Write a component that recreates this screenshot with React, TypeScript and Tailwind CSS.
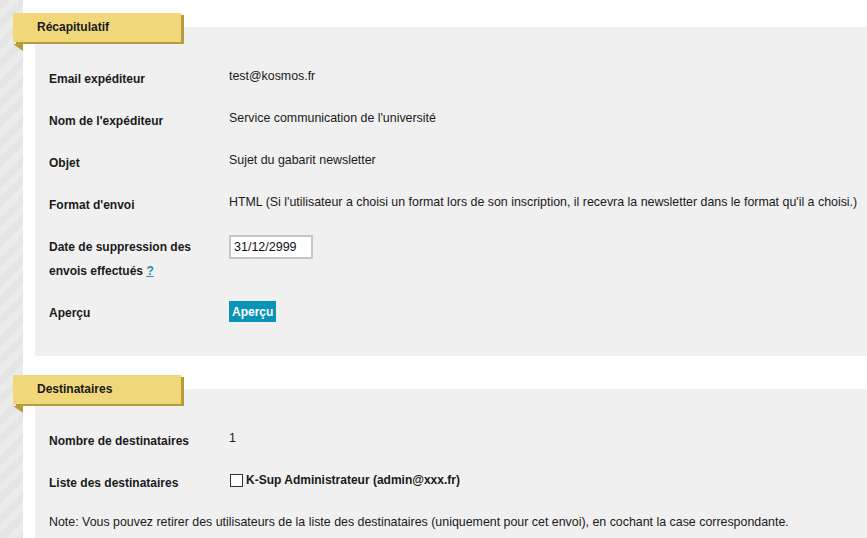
import React from "react";

function Tab({ title }: { title: string }) {
  return (
    <div className="absolute left-[-22px] top-[-14px] h-[29px] w-[168px] bg-[#efd77a] shadow-[3px_2px_0_#b59c3c] pl-[24px] font-bold leading-[29px] text-[#1a1a1a]">
      {title}
      <div className="absolute left-0 top-[31px] h-0 w-0 border-l-[10px] border-t-[7px] border-l-transparent border-t-[#b59c3c]" />
    </div>
  );
}

function Row({ label, children }: { label: React.ReactNode; children?: React.ReactNode }) {
  return (
    <div className="flex items-start">
      <div className="w-[180px] shrink-0 font-bold leading-[24px] text-[#1a1a1a]">{label}</div>
      <div className="text-[12.4px] leading-[18px] text-[#1a1a1a]">{children}</div>
    </div>
  );
}

export default function App() {
  return (
    <div className="flex h-[538px] overflow-hidden bg-white font-['Liberation_Sans',Arial,sans-serif] text-[12px]">
      <div className="w-[23px] shrink-0 bg-[repeating-linear-gradient(135deg,#e5e5e5_0px,#e5e5e5_7px,#ebebeb_7px,#ebebeb_14px)]" />
      <div className="flex-1 pl-[12px] pt-[27px]">
        <section className="relative bg-[#f0f0f0] pb-[31px] pl-[14px] pt-[40px]">
          <Tab title="Récapitulatif" />
          <div className="flex flex-col gap-[18px]">
            <Row label="Email expéditeur">test@kosmos.fr</Row>
            <Row label="Nom de l'expéditeur">Service communication de l'université</Row>
            <Row label="Objet">Sujet du gabarit newsletter</Row>
            <Row label="Format d'envoi">
              <span className="whitespace-nowrap">
                HTML (Si l'utilisateur a choisi un format lors de son inscription, il recevra la newsletter dans le format qu'il a choisi.)
              </span>
            </Row>
            <Row
              label={
                <>
                  Date de suppression des
                  <br />
                  envois effectués{" "}
                  <a href="#" className="text-[#1b8fb4] underline">
                    ?
                  </a>
                </>
              }
            >
              <div className="flex h-[24px] w-[84px] items-center border-2 border-[#c6c6c6] bg-white pl-[3px] text-[12.5px] text-[#111]">
                31/12/2999
              </div>
            </Row>
            <Row label="Aperçu">
              <div className="flex h-[21px] items-center bg-[#0893b7] px-[3px] text-[12px] font-bold text-white">
                Aperçu
              </div>
            </Row>
          </div>
        </section>
        <div className="h-[33px]" />
        <section className="relative bg-[#f0f0f0] pb-[40px] pl-[14px] pt-[40px]">
          <Tab title="Destinataires" />
          <div className="flex flex-col gap-[18px]">
            <Row label="Nombre de destinataires">1</Row>
            <Row label="Liste des destinataires">
              <div className="flex items-center text-[12px]">
                <span className="ml-[1px] mr-[3px] inline-block h-[13px] w-[13px] border border-[#333] bg-white" />
                <span className="font-bold">K-Sup Administrateur (admin@xxx.fr)</span>
              </div>
            </Row>
            <div className="text-[12.4px] leading-[18px] text-[#1a1a1a]">
              Note: Vous pouvez retirer des utilisateurs de la liste des destinataires (uniquement pour cet envoi), en cochant la case correspondante.
            </div>
          </div>
        </section>
      </div>
    </div>
  );
}
